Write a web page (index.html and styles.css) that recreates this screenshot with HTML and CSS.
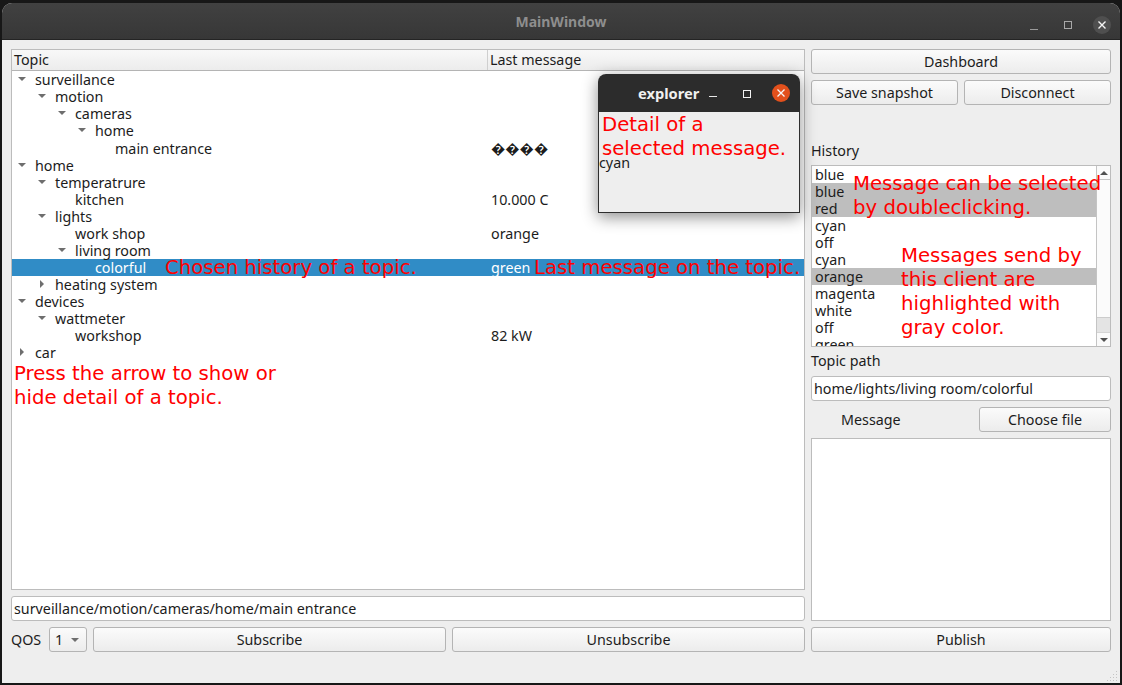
FILE: index.html
```html
<!DOCTYPE html>
<html>
  <head>
    <title>MainWindow</title>
    <link rel="stylesheet" href="styles.css">
  </head>
  <body>
    <div class="ventana">
      <div class="titulo">
        <span class="titulo-texto">MainWindow</span>
        <div class="controles-ventana">
          <svg class="ctl" width="26" height="26" viewBox="0 0 26 26"><path d="M9 17.5h8" stroke="#9a9a9a" stroke-width="1"/></svg>
          <svg class="ctl" width="26" height="26" viewBox="0 0 26 26"><rect x="9.5" y="9.5" width="7" height="7" fill="none" stroke="#a8a8a8"/></svg>
          <svg class="ctl ctl-cerrar" width="18" height="18" viewBox="0 0 18 18"><circle cx="9" cy="9" r="9" fill="#4f4f4f"/><path d="M5.5 5.5l7 7M12.5 5.5l-7 7" stroke="#f4f4f4" stroke-width="1.4"/></svg>
        </div>
      </div>

      <div class="contenido">
        <div class="izquierda">
          <div class="arbol">
            <div class="cabecera">
              <div class="col-topic">Topic</div>
              <div class="col-msg">Last message</div>
            </div>
            <div class="filas">
              <div class="fila"><div class="celda n0"><i class="flecha abierta"></i>surveillance</div></div>
              <div class="fila"><div class="celda n1"><i class="flecha abierta"></i>motion</div></div>
              <div class="fila"><div class="celda n2"><i class="flecha abierta"></i>cameras</div></div>
              <div class="fila"><div class="celda n3"><i class="flecha abierta"></i>home</div></div>
              <div class="fila alta"><div class="celda n4"><i class="flecha"></i>main entrance</div><div class="valor">����</div></div>
              <div class="fila"><div class="celda n0"><i class="flecha abierta"></i>home</div></div>
              <div class="fila"><div class="celda n1"><i class="flecha abierta"></i>temperatrure</div></div>
              <div class="fila"><div class="celda n2"><i class="flecha"></i>kitchen</div><div class="valor">10.000 C</div></div>
              <div class="fila"><div class="celda n1"><i class="flecha abierta"></i>lights</div></div>
              <div class="fila"><div class="celda n2"><i class="flecha"></i>work shop</div><div class="valor">orange</div></div>
              <div class="fila"><div class="celda n2"><i class="flecha abierta"></i>living room</div></div>
              <div class="fila elegida"><div class="celda n3"><i class="flecha"></i>colorful</div><div class="valor">green</div></div>
              <div class="fila"><div class="celda n1"><i class="flecha cerrada"></i>heating system</div></div>
              <div class="fila"><div class="celda n0"><i class="flecha abierta"></i>devices</div></div>
              <div class="fila"><div class="celda n1"><i class="flecha abierta"></i>wattmeter</div></div>
              <div class="fila"><div class="celda n2"><i class="flecha"></i>workshop</div><div class="valor">82 kW</div></div>
              <div class="fila"><div class="celda n0"><i class="flecha cerrada"></i>car</div></div>
            </div>
          </div>
          <div class="entrada">surveillance/motion/cameras/home/main entrance</div>
          <div class="fila-botones">
            <span class="etiqueta-qos">QOS</span>
            <div class="combo">1<i class="flecha abierta"></i></div>
            <button>Subscribe</button>
            <button>Unsubscribe</button>
          </div>
        </div>

        <div class="derecha">
          <button>Dashboard</button>
          <div class="fila-botones">
            <button>Save snapshot</button>
            <button>Disconnect</button>
          </div>
          <div class="etiqueta etiqueta-historia">History</div>
          <div class="historia">
            <div class="mensajes">
              <div class="msg">blue</div>
              <div class="msg gris">blue</div>
              <div class="msg gris">red</div>
              <div class="msg">cyan</div>
              <div class="msg">off</div>
              <div class="msg">cyan</div>
              <div class="msg gris">orange</div>
              <div class="msg">magenta</div>
              <div class="msg">white</div>
              <div class="msg">off</div>
              <div class="msg">green</div>
            </div>
            <div class="barra">
              <div class="barra-boton"><i class="flecha abierta arriba"></i></div>
              <div class="barra-pista"><div class="barra-mango"></div></div>
              <div class="barra-boton abajo"><i class="flecha abierta"></i></div>
            </div>
          </div>
          <div class="etiqueta">Topic path</div>
          <div class="entrada">home/lights/living room/colorful</div>
          <div class="fila-mensaje">
            <span class="etiqueta-mensaje">Message</span>
            <button class="boton-archivo">Choose file</button>
          </div>
          <div class="area"></div>
          <button>Publish</button>
        </div>
      </div>
      <div class="agarre"></div>

      <div class="nota nota-flecha">Press the arrow to show or<br>hide detail of a topic.</div>
      <div class="nota nota-elegida">Chosen history of a topic.</div>
      <div class="nota nota-ultimo">Last message on the topic.</div>
      <div class="nota nota-doble">Message can be selected<br>by doubleclicking.</div>
      <div class="nota nota-enviados">Messages send by<br>this client are<br>highlighted with<br>gray color.</div>

      <div class="explorer">
        <div class="explorer-titulo">
          <span class="explorer-nombre">explorer</span>
          <svg class="explorer-min" width="10" height="10" viewBox="0 0 10 10"><path d="M1 8.5h8" stroke="#e8e8e8"/></svg>
          <svg class="explorer-max" width="10" height="10" viewBox="0 0 10 10"><rect x="1.5" y="1.5" width="7" height="7" fill="none" stroke="#f2f2f2"/></svg>
          <svg class="explorer-cerrar" width="18" height="18" viewBox="0 0 18 18"><circle cx="9" cy="9" r="9" fill="#e2501c"/><path d="M5.5 5.5l7 7M12.5 5.5l-7 7" stroke="#f8f8f8" stroke-width="1.3"/></svg>
        </div>
        <div class="explorer-cuerpo">
          <div class="nota-detalle">Detail of a<br>selected message.</div>
          <div class="explorer-texto">cyan</div>
        </div>
      </div>
    </div>
  </body>
</html>
```

FILE: styles.css
```css
html, body {
  margin: 0;
  height: 100%;
  overflow: hidden;
}
body {
  background-color: #171717;
  font-family: "Noto Sans", sans-serif;
  font-size: 14.3px;
  color: #1c1c1c;
}
.ventana {
  position: relative;
  margin: 3px 2px 0 2px;
  height: 680px;
  background-color: #eeeeee;
  border-radius: 10px 10px 0 0;
  overflow: hidden;
}
.titulo {
  position: relative;
  height: 37px;
  background: linear-gradient(#414141, #373737);
  border-bottom: 1px solid #242424;
  box-sizing: border-box;
  display: flex;
  align-items: center;
  justify-content: center;
}
.titulo-texto {
  font-size: 14px;
  font-weight: bold;
  color: #8e8e8e;
}
.controles-ventana {
  position: absolute;
  right: 9px;
  top: 9px;
  display: flex;
  align-items: center;
  gap: 8px;
}
.ctl {
  display: block;
}
.ctl-cerrar {
  margin-left: 4px;
}
.contenido {
  display: flex;
  gap: 6px;
  padding: 9px 9px 0 9px;
}
.izquierda {
  width: 794px;
  display: flex;
  flex-direction: column;
  gap: 6px;
}
.derecha {
  width: 300px;
  display: flex;
  flex-direction: column;
  gap: 6px;
}
.arbol {
  height: 541px;
  box-sizing: border-box;
  background-color: #ffffff;
  border: 1px solid #bcbcbc;
}
.cabecera {
  display: flex;
  height: 21px;
  box-sizing: border-box;
  background: linear-gradient(#f8f8f8, #ececec);
  border-bottom: 1px solid #b4b4b4;
  line-height: 20px;
}
.col-topic {
  width: 473px;
  padding-left: 2px;
  border-right: 1px solid #cfcfcf;
}
.col-msg {
  padding-left: 2px;
}
.fila {
  display: flex;
  height: 17px;
  line-height: 17px;
  white-space: nowrap;
}
.alta {
  height: 18px;
  line-height: 19px;
}
.celda {
  width: 478px;
  box-sizing: border-box;
  position: relative;
}
.n0 { padding-left: 23px; }
.n1 { padding-left: 43px; }
.n2 { padding-left: 63px; }
.n3 { padding-left: 83px; }
.n4 { padding-left: 103px; }
.valor {
  padding-left: 1px;
}
.elegida {
  background-color: #308cc6;
  color: #ffffff;
}
.flecha {
  display: none;
}
.flecha.abierta {
  display: block;
  width: 0;
  height: 0;
  border-left: 4px solid transparent;
  border-right: 4px solid transparent;
  border-top: 4px solid #6e6e6e;
}
.flecha.cerrada {
  display: block;
  width: 0;
  height: 0;
  border-top: 4px solid transparent;
  border-bottom: 4px solid transparent;
  border-left: 4px solid #6e6e6e;
}
.celda .flecha {
  position: absolute;
  top: 6px;
}
.celda .flecha.cerrada {
  top: 4px;
}
.n0 .flecha { left: 6px; }
.n1 .flecha { left: 26px; }
.n2 .flecha { left: 46px; }
.n3 .flecha { left: 66px; }
.n0 .cerrada { left: 8px; }
.n1 .cerrada { left: 28px; }
.entrada {
  height: 25px;
  box-sizing: border-box;
  background-color: #ffffff;
  border: 1px solid #bcbcbc;
  border-radius: 3px;
  padding-left: 2px;
  line-height: 23px;
}
.fila-botones {
  display: flex;
  gap: 6px;
  align-items: center;
}
.fila-botones button {
  flex: 1;
}
button {
  height: 25px;
  padding: 0;
  box-sizing: border-box;
  font-family: inherit;
  font-size: 14.3px;
  color: #1c1c1c;
  background: linear-gradient(#fbfbfb, #ececec);
  border: 1px solid #b4b4b4;
  border-radius: 3px;
}
.etiqueta-qos {
  width: 32px;
}
.combo {
  width: 38px;
  height: 25px;
  box-sizing: border-box;
  display: flex;
  align-items: center;
  justify-content: space-between;
  padding: 0 7px 0 5px;
  background: linear-gradient(#fbfbfb, #ececec);
  border: 1px solid #b4b4b4;
  border-radius: 3px;
}
.etiqueta {
  height: 17px;
  line-height: 16px;
}
.etiqueta-historia {
  height: 16px;
  line-height: 15px;
  margin-top: 32px;
}
.historia {
  height: 182px;
  box-sizing: border-box;
  display: flex;
  background-color: #ffffff;
  border: 1px solid #bcbcbc;
}
.mensajes {
  flex: 1;
  overflow: hidden;
}
.msg {
  height: 17px;
  line-height: 17px;
  padding-left: 3px;
}
.gris {
  background-color: #bebebe;
}
.barra {
  width: 14px;
  box-sizing: border-box;
  display: flex;
  flex-direction: column;
  border-left: 1px solid #c4c4c4;
}
.barra-boton {
  height: 14px;
  display: flex;
  align-items: center;
  justify-content: center;
  border-bottom: 1px solid #c4c4c4;
  box-sizing: border-box;
  background-color: #fafafa;
}
.barra-boton .flecha {
  border-top-color: #505050;
  border-bottom-color: #505050;
}
.barra-boton.abajo {
  border-bottom: none;
  border-top: 1px solid #d4d4d4;
}
.barra-pista {
  flex: 1;
  display: flex;
  flex-direction: column;
  justify-content: flex-end;
  background-color: #fbfbfb;
}
.barra-mango {
  height: 15px;
  box-sizing: border-box;
  background-color: #e4e4e4;
  border-top: 1px solid #cccccc;
}
.flecha.arriba {
  border-top: none;
  border-bottom: 4px solid #505050;
}
.fila-mensaje {
  display: flex;
  align-items: center;
  justify-content: space-between;
}
.etiqueta-mensaje {
  margin-left: 30px;
}
.boton-archivo {
  width: 132px;
}
.area {
  height: 183px;
  box-sizing: border-box;
  background-color: #ffffff;
  border: 1px solid #bcbcbc;
}
.agarre {
  position: absolute;
  right: 3px;
  bottom: 2px;
  width: 11px;
  height: 11px;
  background-image: radial-gradient(#c4c4c4 1px, transparent 1px);
  background-size: 3px 3px;
  clip-path: polygon(100% 0, 100% 100%, 0 100%);
}
.nota, .nota-detalle {
  font-family: "DejaVu Sans", sans-serif;
  font-size: 19.7px;
  line-height: 24px;
  color: #ff0000;
  white-space: nowrap;
}
.nota {
  position: absolute;
}
.nota-flecha { left: 12px; top: 359px; }
.nota-elegida { left: 163px; top: 253px; }
.nota-ultimo { left: 532px; top: 253px; }
.nota-doble { left: 851px; top: 169px; }
.nota-enviados { left: 899px; top: 241px; }
.explorer {
  position: absolute;
  left: 596px;
  top: 71px;
  width: 202px;
  height: 139px;
  border-radius: 8px 8px 0 0;
  box-shadow: 0 4px 16px rgba(0, 0, 0, 0.45);
  display: flex;
  flex-direction: column;
}
.explorer-titulo {
  position: relative;
  height: 38px;
  flex: none;
  background-color: #2c2c2c;
  border-radius: 8px 8px 0 0;
}
.explorer-nombre {
  position: absolute;
  left: 40px;
  top: 9px;
  font-size: 14.7px;
  font-weight: bold;
  color: #f0f0f0;
}
.explorer-min { position: absolute; left: 110px; top: 14px; }
.explorer-max { position: absolute; left: 144px; top: 15px; }
.explorer-cerrar { position: absolute; left: 174px; top: 10px; }
.explorer-cuerpo {
  flex: 1;
  box-sizing: border-box;
  background-color: #eeeeee;
  border: 1px solid #2e2e2e;
  border-top: none;
  padding: 1px 0 0 3px;
}
.explorer-texto {
  margin-left: -3px;
  line-height: 17px;
  margin-top: -7px;
}
```
